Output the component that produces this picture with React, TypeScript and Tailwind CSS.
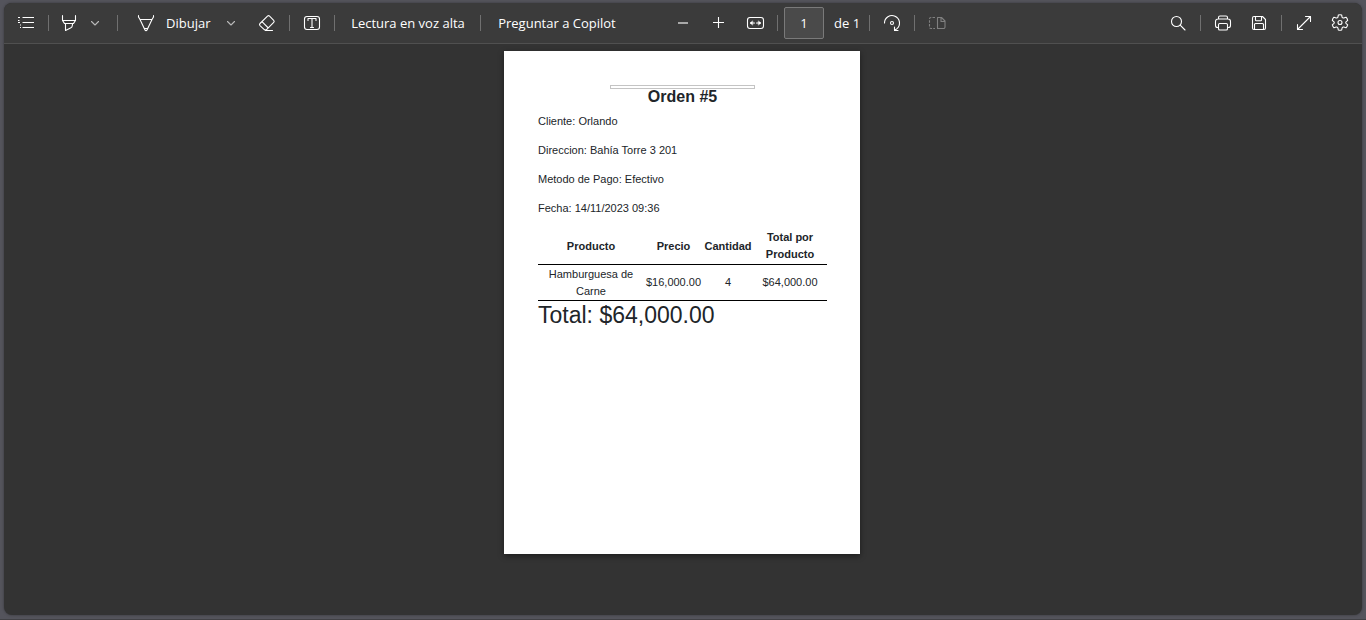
import type { ReactNode } from 'react';

const order = {
  id: 5,
  details: [
    ['Cliente', 'Orlando'],
    ['Direccion', 'Bahía Torre 3 201'],
    ['Metodo de Pago', 'Efectivo'],
    ['Fecha', '14/11/2023 09:36'],
  ],
  items: [{ product: 'Hamburguesa de Carne', price: '$16,000.00', quantity: 4, total: '$64,000.00' }],
  total: '$64,000.00',
};

function Icon({ children }: { children: ReactNode }) {
  return (
    <svg
      className="h-5 w-5 shrink-0"
      viewBox="0 0 20 20"
      fill="none"
      stroke="currentColor"
      strokeWidth="1.1"
      strokeLinecap="round"
      strokeLinejoin="round"
      aria-hidden="true"
    >
      {children}
    </svg>
  );
}

function IconButton({ label, children, disabled }: { label: string; children: ReactNode; disabled?: boolean }) {
  return (
    <button
      type="button"
      aria-label={label}
      disabled={disabled}
      className="flex h-8 w-8 shrink-0 items-center justify-center rounded hover:bg-white/10 disabled:text-[#808080]"
    >
      <Icon>{children}</Icon>
    </button>
  );
}

function MenuButton({ label }: { label: string }) {
  return (
    <button type="button" aria-label={label} className="flex h-8 w-5 shrink-0 items-center justify-center rounded text-[#b8b8b8] hover:bg-white/10">
      <Icon>
        <path d="M6.5 8.5 10 12l3.5-3.5" />
      </Icon>
    </button>
  );
}

function Separator() {
  return <span className="mx-1.5 h-4 w-px shrink-0 bg-[#707070]" />;
}

function Toolbar() {
  return (
    <header className="flex h-10 shrink-0 items-center bg-[#3b3b3b] px-1.5 font-['Open_Sans','Noto_Sans',sans-serif] text-[13px] text-white">
      <div className="flex w-[657px] shrink-0 items-center">
        <IconButton label="Contenido">
          <path d="M6.500 4.500h11.500M6.500 9.500h11.500M6.500 14.500h11.500" strokeLinecap="butt" />
          <path d="M2 4.500h2M2 7.500h1.500M2 9.500h2M4 12h1M4 14.500h1" strokeLinecap="butt" />
        </IconButton>
        <Separator />
        <button type="button" aria-label="Resaltar" className="mr-0.5 flex h-8 w-7 shrink-0 items-center justify-center rounded hover:bg-white/10">
          <Icon>
            <path d="M3.500 2.500V7a1 1 0 0 0 .2.600l1.400 2.300a1.200 1.200 0 0 0 1 .6h7.800a1.200 1.200 0 0 0 1-.6l1.400-2.300A1 1 0 0 0 16.500 7V2.500M3.500 7.500h13M6.500 10.500v7l5-2.500a2.500 2.500 0 0 0 1.800-2.200l.2-2.300" />
          </Icon>
        </button>
        <MenuButton label="Opciones de resaltado" />
        <span className="w-1.5" />
        <Separator />
        <button type="button" className="ml-3 flex h-8 shrink-0 items-center gap-2.5 rounded hover:bg-white/10">
          <Icon>
            <path d="M2.500 2.500v1.500l1.500 2.500h12l1.500-2.500V2.500M4 6.500l5 10.500a1.100 1.100 0 0 0 2 0L16 6.500M8.500 15.500h3" />
          </Icon>
          <span className="pt-px">Dibujar</span>
        </button>
        <span className="w-[11px]" />
        <MenuButton label="Opciones de dibujo" />
        <span className="w-2.5" />
        <IconButton label="Borrar">
          <path d="m3 10.500 7.500-7.300a1.500 1.500 0 0 1 2.100 0l4.100 4.100a1.500 1.500 0 0 1 0 2.100L9.800 16.300a2 2 0 0 1-2.800 0L3 12.600a1.500 1.500 0 0 1 0-2.100ZM5 8.700l6.300 6.300M8.500 17.500h7" />
        </IconButton>
        <Separator />
        <IconButton label="Agregar texto">
          <rect x="2.500" y="3.500" width="15" height="13" rx="2.500" />
          <path d="M6 7.500V5.500h8v2M10 5.500v9M8.500 14.500h3" />
        </IconButton>
        <Separator />
        <button type="button" className="h-8 w-[133px] shrink-0 rounded pt-0.5 hover:bg-white/10">Lectura en voz alta</button>
        <Separator />
        <button type="button" className="h-8 w-[139px] shrink-0 rounded pt-0.5 hover:bg-white/10">Preguntar a Copilot</button>
      </div>

      <div className="flex shrink-0 items-center">
        <div className="flex gap-1">
          <IconButton label="Alejar">
            <path d="M5 10h10" strokeWidth="2" strokeLinecap="butt" className="text-[#a8a8a8]" stroke="currentColor" />
          </IconButton>
          <IconButton label="Acercar">
            <path d="M4 9.500h11M9.500 4v11" strokeLinecap="butt" />
          </IconButton>
          <IconButton label="Ajustar al ancho">
            <rect x="2.500" y="4.500" width="16" height="11" rx="2.500" />
            <path d="M5.500 10h4M11.500 10h4" />
            <path d="M7.500 8l-2.500 2 2.500 2ZM13.500 8l2.500 2-2.500 2Z" fill="currentColor" strokeWidth="0.400" />
          </IconButton>
        </div>
        <Separator />
        <input
          aria-label="Número de página"
          defaultValue="1"
          className="h-8 w-10 rounded-xs border border-[#7a7a7a] bg-[#4a4a4a] text-center outline-none"
        />
        <span className="w-[39px] pt-px pl-2.5">de 1</span>
        <Separator />
        <IconButton label="Girar">
          <path d="M2.500 10A7.500 7.500 0 1 1 15 15.600L12.500 17.500M12.500 14v3.500H16" />
          <circle cx="10" cy="10" r="1.500" />
        </IconButton>
        <Separator />
        <IconButton label="Vista de página" disabled>
          <path d="M10.500 4.500h4l3.500 3.500v6a1.500 1.500 0 0 1-1.500 1.500h-6zM14 4.500V8.500h4" />
          <path d="M8 4.500H4A1.500 1.500 0 0 0 2.500 6v8A1.500 1.500 0 0 0 4 15.500h4" strokeDasharray="2.500 1.200" strokeLinecap="butt" />
        </IconButton>
      </div>

      <div className="ml-auto flex shrink-0 items-center">
        <IconButton label="Buscar">
          <circle cx="8.500" cy="8.500" r="5" />
          <path d="m12.200 12.200 4.800 4.800" />
        </IconButton>
        <Separator />
        <IconButton label="Imprimir">
          <path d="M5.500 6V4.500A1.500 1.500 0 0 1 7 3h6a1.500 1.500 0 0 1 1.500 1.500V6M5.500 14.500h-1a2 2 0 0 1-2-2V8.500a2.500 2.500 0 0 1 2.500-2.500h10a2.500 2.500 0 0 1 2.500 2.500v4a2 2 0 0 1-2 2h-1" />
          <rect x="5.500" y="10.500" width="9" height="6.500" rx="1.300" />
        </IconButton>
        <span className="w-1" />
        <IconButton label="Guardar">
          <path d="M5 3.500h8.500l3 3V15a1.500 1.500 0 0 1-1.500 1.500H5A1.500 1.500 0 0 1 3.500 15V5A1.500 1.500 0 0 1 5 3.500ZM6.500 3.500V7a.8.8 0 0 0 .8.8h4.400a.8.8 0 0 0 .8-.8V3.500M5.500 16.500v-5a1 1 0 0 1 1-1h7a1 1 0 0 1 1 1v5" />
        </IconButton>
        <Separator />
        <IconButton label="Pantalla completa">
          <path d="M11.500 3.500h5v5M16.500 3.500l-13 13M3.500 11.500v5h5" />
        </IconButton>
        <span className="w-1" />
        <IconButton label="Configuración">
          <path d="M8.300 2.100Q10 1.500 11.700 2.100L12.100 4.300Q12.600 5.200 13.800 5L16 4.200Q17.300 5.600 17.700 7.300L16 8.800Q15.400 9.500 16 10.300L17.700 11.800Q17.200 13.500 16 14.800L13.800 14Q12.600 13.900 12.100 14.900L11.700 17Q10 17.500 8.300 17L7.900 14.900Q7.400 13.900 6.200 14L4 14.800Q2.800 13.500 2.300 11.800L4 10.300Q4.600 9.500 4 8.800L2.300 7.300Q2.700 5.600 4 4.200L6.200 5Q7.400 5.200 7.900 4.300Z" />
          <circle cx="10" cy="9.500" r="2" />
        </IconButton>
      </div>
    </header>
  );
}

function OrderSheet() {
  return (
    <article className="min-h-[503px] w-[356px] bg-white pt-[34px] pr-[33px] pl-[34px] font-['Liberation_Sans',Arial,sans-serif] text-[11px] leading-[17px] text-[#212529] shadow-[0_2px_6px_rgba(0,0,0,0.45)]">
      <div className="mx-auto h-1 w-[145px] border border-[#c4c4c4]" />
      <h1 className="mb-2 text-center text-base leading-4 font-bold">Orden #{order.id}</h1>
      {order.details.map(([name, value]) => (
        <p key={name} className="mb-3">
          {name}: {value}
        </p>
      ))}
      <table className="w-full table-fixed border-collapse text-center">
        <colgroup>
          <col className="w-[106px]" />
          <col className="w-[59px]" />
          <col className="w-[50px]" />
          <col />
        </colgroup>
        <thead>
          <tr className="border-b border-black">
            <th className="px-2 pb-px">Producto</th>
            <th className="pb-px">Precio</th>
            <th className="pb-px">Cantidad</th>
            <th className="px-2 pb-px">Total por Producto</th>
          </tr>
        </thead>
        <tbody>
          {order.items.map((item) => (
            <tr key={item.product} className="border-b border-black">
              <td className="px-2 pt-px">{item.product}</td>
              <td>{item.price}</td>
              <td>{item.quantity}</td>
              <td>{item.total}</td>
            </tr>
          ))}
        </tbody>
      </table>
      <p className="text-[23px] leading-7">Total: {order.total}</p>
    </article>
  );
}

export default function App() {
  return (
    <div className="flex min-h-screen flex-col border-b border-[#414145] bg-[#54545c] px-1 pt-[3px] pb-1">
      <div className="flex grow flex-col overflow-hidden rounded-lg bg-[#333333] shadow-[0_0_3px_rgba(0,0,0,0.35)]">
        <Toolbar />
        <main className="flex grow items-start justify-center border-t border-[#505050] pt-[7px] pr-0.5">
          <OrderSheet />
        </main>
      </div>
    </div>
  );
}
